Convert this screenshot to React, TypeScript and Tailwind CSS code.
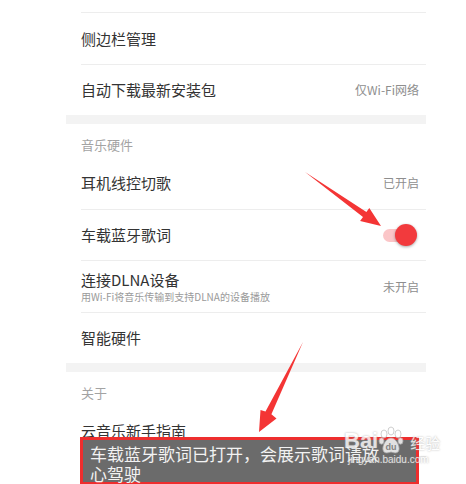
import React from "react";

const Row = ({
  children,
  right,
  h,
  border = true,
}: {
  children: React.ReactNode;
  right?: React.ReactNode;
  h: string;
  border?: boolean;
}) => (
  <div className="pl-[15px]">
    <div
      className={`flex items-center justify-between pr-[7px] ${h} ${
        border ? "border-b border-[#ededed]" : ""
      }`}
    >
      {children}
      {right}
    </div>
  </div>
);

const Title = ({ children }: { children: React.ReactNode }) => (
  <div className="text-[15px] leading-[20px] text-[#333333]">{children}</div>
);

const RightText = ({ children }: { children: React.ReactNode }) => (
  <div className="text-[12px] leading-[16px] text-[#8e8e8e]">{children}</div>
);

const Header = ({ children }: { children: React.ReactNode }) => (
  <div className="h-[33px] pl-[15px] pt-[12px] text-[13px] leading-[18px] text-[#a3a3a3]">
    {children}
  </div>
);

export default function App() {
  return (
    <div className="relative h-[484px] w-[466px] overflow-hidden bg-white font-['Noto_Sans_CJK_SC','Noto_Sans',sans-serif]">
      <div className="ml-[66px] w-[360px]">
        <div className="pl-[15px]">
          <div className="h-[13px] border-b border-[#ededed]" />
        </div>
        <Row h="h-[52px]">
          <Title>侧边栏管理</Title>
        </Row>
        <Row h="h-[50px]" border={false} right={<RightText>仅Wi-Fi网络</RightText>}>
          <Title>自动下载最新安装包</Title>
        </Row>
        <div className="h-[9px] bg-[#f3f3f3]" />
        <Header>音乐硬件</Header>
        <Row h="h-[53px]" right={<RightText>已开启</RightText>}>
          <Title>耳机线控切歌</Title>
        </Row>
        <Row
          h="h-[51px]"
          right={
            <div className="relative h-[22px] w-[36px]">
              <div className="absolute left-0 top-[5px] h-[13px] w-[30px] rounded-full bg-[#fbc6c8]" />
              <div className="absolute right-[2px] top-0 h-[22px] w-[22px] rounded-full bg-[#f23a3d] shadow-[0_1px_3px_rgba(0,0,0,0.35)]" />
            </div>
          }
        >
          <Title>车载蓝牙歌词</Title>
        </Row>
        <Row h="h-[52px]" right={<RightText>未开启</RightText>}>
          <div>
            <Title>连接DLNA设备</Title>
            <div className="text-[10px] leading-[13px] text-[#9a9a9a]">
              用Wi-Fi将音乐传输到支持DLNA的设备播放
            </div>
          </div>
        </Row>
        <Row h="h-[50px]" border={false}>
          <Title>智能硬件</Title>
        </Row>
        <div className="h-[9px] bg-[#f3f3f3]" />
        <Header>关于</Header>
        <Row h="h-[52px]">
          <Title>云音乐新手指南</Title>
        </Row>
      </div>

      {/* toast highlighted with red box */}
      <div className="absolute left-[80px] top-[437px] h-[48px] w-[339px] border-[3px] border-[#ee2e2e] bg-[#6b6b6b] pl-[7px] pt-[4px] text-[17px] leading-[20px] text-[#f2f2f2]">
        车载蓝牙歌词已打开，会展示歌词请放
        <br />
        心驾驶
      </div>

      {/* red arrows */}
      <svg className="absolute left-0 top-0" width="466" height="484" viewBox="0 0 466 484">
        <polygon
          points="305,172 366.4,211.9 369.3,207.9 381,226 360.1,220.9 363,216.9"
          fill="#f43535"
        />
        <polygon
          points="303,342 271.4,414.3 276.5,418.5 259,432 260.5,410 265.5,411.5"
          fill="#f43535"
        />
      </svg>

      {/* baidu watermark */}
      <div className="absolute left-[344px] top-[426px] text-white opacity-80">
        <div className="flex items-end">
          <span className="font-['Liberation_Sans',sans-serif] text-[22px] font-bold leading-[26px] [text-shadow:0_0_2px_#9a9a9a]">
            Bai
          </span>
          <svg width="26" height="30" viewBox="0 0 26 30" className="mb-[-2px]">
            <g fill="#ffffff" stroke="#b5b5b5" strokeWidth="0.8">
              <ellipse cx="6" cy="8" rx="3" ry="4" />
              <ellipse cx="13" cy="5" rx="3" ry="4" />
              <ellipse cx="20" cy="8" rx="3" ry="4" />
              <ellipse cx="3.5" cy="15" rx="2.5" ry="3.2" />
              <ellipse cx="22.5" cy="15" rx="2.5" ry="3.2" />
              <path d="M13 12 C8 12 4 20 5 24 C6 28 10 27 13 26 C16 27 20 28 21 24 C22 20 18 12 13 12Z" />
            </g>
            <text x="13" y="24" textAnchor="middle" fontSize="9" fontWeight="bold" fill="#8a8a8a" fontFamily="Liberation Sans, sans-serif">
              du
            </text>
          </svg>
          <span className="ml-[6px] text-[15px] leading-[22px] [text-shadow:0_0_2px_#9a9a9a]">
            经验
          </span>
        </div>
        <div className="ml-[4px] font-['Liberation_Sans',sans-serif] text-[10px] leading-[12px] [text-shadow:0_0_2px_#8a8a8a]">
          jingyan.baidu.com
        </div>
      </div>
    </div>
  );
}
